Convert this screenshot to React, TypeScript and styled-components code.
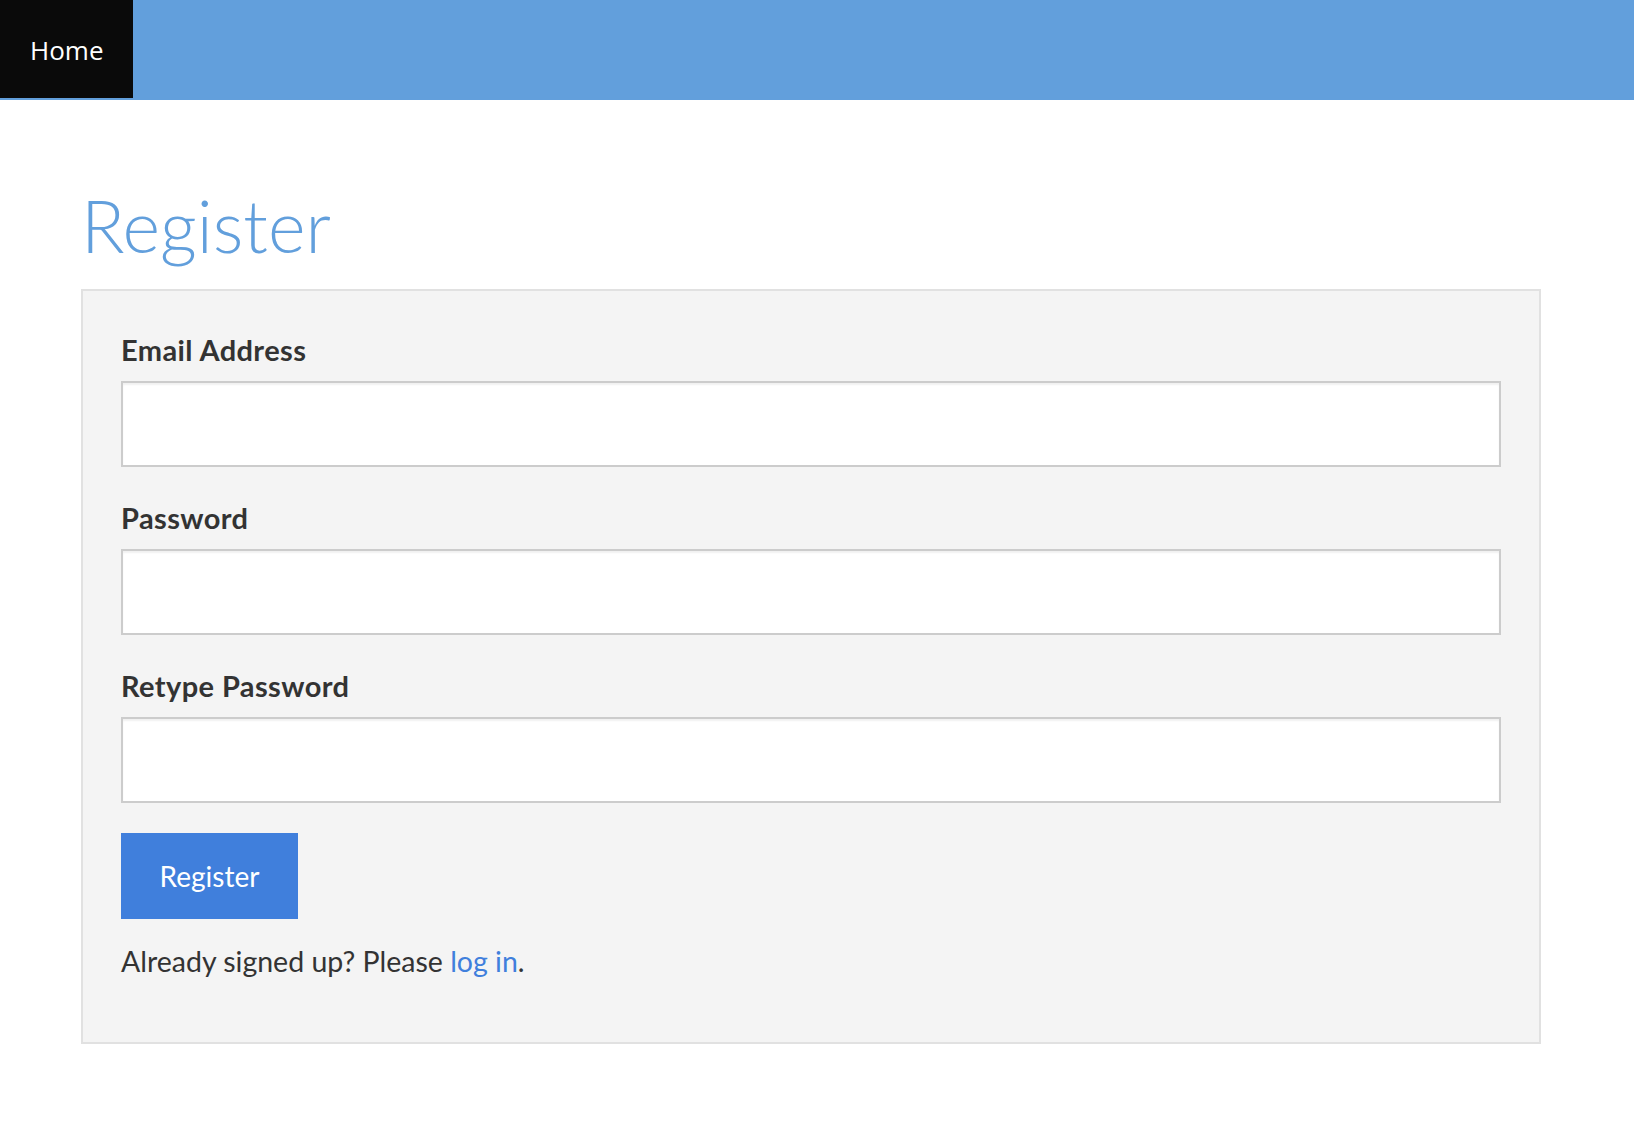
import React from "react";
import styled, { createGlobalStyle } from "styled-components";

const GlobalStyle = createGlobalStyle`
  html, body {
    margin: 0;
    padding: 0;
    background: #ffffff;
  }
  body {
    font-family: "Source Sans Pro", Lato, "Noto Sans", sans-serif;
    color: #333333;
  }
  * { box-sizing: border-box; }
`;

const NavBar = styled.nav`
  display: flex;
  align-items: flex-start;
  height: 100px;
  background: #629fdc;
`;

const NavLink = styled.a`
  display: flex;
  align-items: center;
  height: 98px;
  padding: 2px 30px 0 30px;
  background: #0a0a0a;
  color: #ffffff;
  font-family: "Open Sans", "Noto Sans", sans-serif;
  font-size: 26px;
  text-decoration: none;
`;

const Main = styled.main`
  padding: 0 0 0 81px;
`;

const Title = styled.h1`
  margin: 88px 0 27px 0;
  font-family: Lato, sans-serif;
  font-weight: 300;
  font-size: 72px;
  line-height: 74px;
  color: #629fdc;
`;

const Panel = styled.section`
  width: 1460px;
  padding: 42px 38px 64px 38px;
  background: #f4f4f4;
  border: 2px solid #e1e1e1;
`;

const Fields = styled.div`
  display: flex;
  flex-direction: column;
  gap: 34px;
`;

const Field = styled.div`
  display: flex;
  flex-direction: column;
  gap: 14px;
`;

const Label = styled.label`
  font-family: Lato, sans-serif;
  font-weight: 700;
  font-size: 29px;
  letter-spacing: 0.4px;
  line-height: 34px;
  color: #333333;
`;

const Input = styled.input`
  display: block;
  width: 100%;
  height: 86px;
  margin: 0;
  padding: 0 16px;
  border: 2px solid #cccccc;
  border-radius: 0;
  background: #ffffff;
  box-shadow: inset 0 2px 2px rgba(0, 0, 0, 0.06);
  font-family: Lato, sans-serif;
  font-size: 28px;
  outline: none;
`;

const Button = styled.button`
  display: block;
  width: 177px;
  height: 86px;
  margin-top: 30px;
  padding: 0;
  border: none;
  border-radius: 0;
  background: #407fdc;
  color: #ffffff;
  font-family: Lato, sans-serif;
  font-size: 28px;
  cursor: pointer;
`;

const Note = styled.p`
  margin: 25px 0 0 0;
  font-family: Lato, sans-serif;
  font-size: 28.5px;
  line-height: 34px;
  color: #333333;
`;

const Link = styled.a`
  color: #407fdc;
  text-decoration: none;
`;

export default function App() {
  return (
    <>
      <GlobalStyle />
      <NavBar>
        <NavLink href="#">Home</NavLink>
      </NavBar>
      <Main>
        <Title>Register</Title>
        <Panel>
          <Fields>
            <Field>
              <Label htmlFor="email">Email Address</Label>
              <Input id="email" type="email" />
            </Field>
            <Field>
              <Label htmlFor="password">Password</Label>
              <Input id="password" type="password" />
            </Field>
            <Field>
              <Label htmlFor="password2">Retype Password</Label>
              <Input id="password2" type="password" />
            </Field>
          </Fields>
          <Button type="button">Register</Button>
          <Note>
            Already signed up? Please <Link href="#">log in</Link>.
          </Note>
        </Panel>
      </Main>
    </>
  );
}
